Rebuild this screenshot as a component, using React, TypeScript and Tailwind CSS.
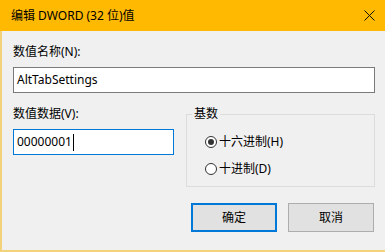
export default function App() {
  return (
    <div className="w-[385px] h-[252px] bg-[#f0f0f0] flex flex-col text-[12px] text-black font-['Noto_Sans','Noto_Sans_CJK_SC',sans-serif]">
      <div className="h-[31px] shrink-0 bg-[#ffb900] flex items-center justify-between pl-[11px] pr-[10px]">
        <span className="leading-4">编辑 DWORD (32 位)值</span>
        <svg width="11" height="11" viewBox="0 0 11 11" className="text-[#111]">
          <path d="M0.5 0.5 L10.5 10.5 M10.5 0.5 L0.5 10.5" stroke="currentColor" strokeWidth="1" fill="none" />
        </svg>
      </div>

      <div className="flex-1 border-l-2 border-b-2 border-[#f2d37c] pl-[11px] pr-[10px] pt-[13px]">
        <div className="leading-4">数值名称(N):</div>
        <div className="mt-[7px] h-[26px] border border-[#7a7a7a] bg-white flex items-center pl-[3px]">
          AltTabSettings
        </div>

        <div className="flex items-start mt-[13px]">
          <div className="w-[161px]">
            <div className="leading-4">数值数据(V):</div>
            <div className="mt-[7px] h-[26px] border border-[#0078d7] bg-white flex items-center pl-[3px]">
              <span>00000001</span>
              <span className="ml-px w-px h-[17px] bg-black" />
            </div>
          </div>

          <fieldset className="ml-[12px] w-[189px] border border-[#dcdcdc] p-0 pb-[9px]">
            <legend className="ml-[5px] px-[2px] leading-4">基数</legend>
            <div className="pl-[18px] mt-[12px] flex flex-col gap-[11px]">
              <label className="flex items-center h-4 leading-4">
                <span className="w-[12px] h-[12px] rounded-full border border-[#333] bg-white flex items-center justify-center">
                  <span className="w-[6px] h-[6px] rounded-full bg-[#333]" />
                </span>
                <span className="ml-[2px]">十六进制(H)</span>
              </label>
              <label className="flex items-center h-4 leading-4">
                <span className="w-[12px] h-[12px] rounded-full border border-[#333] bg-white" />
                <span className="ml-[2px]">十进制(D)</span>
              </label>
            </div>
          </fieldset>
        </div>

        <div className="flex justify-end gap-[11px] mt-[16px] pr-px">
          <button className="w-[86px] h-[29px] border-2 border-[#0078d7] bg-[#e1e1e1] leading-4">确定</button>
          <button className="w-[86px] h-[29px] border border-[#adadad] bg-[#e1e1e1] leading-4">取消</button>
        </div>
      </div>
    </div>
  );
}
